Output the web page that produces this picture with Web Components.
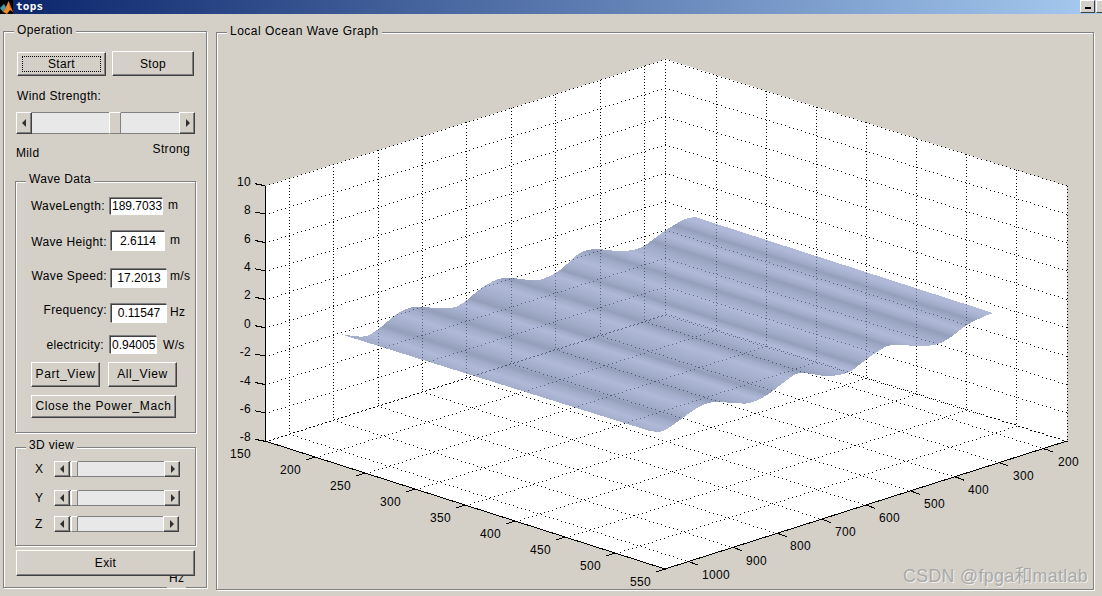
<!DOCTYPE html>
<html>
<head>
<meta charset="utf-8">
<title>tops</title>
<style>
  html, body { margin: 0; padding: 0; background: #d4d0c8; overflow: hidden; }
</style>
</head>
<body>
<tops-app></tops-app>
<script>
const BASE = `:host{font-family:"Liberation Sans",Arial,sans-serif;font-size:12px;line-height:14px;color:#000;letter-spacing:.35px}`;

class WinTitle extends HTMLElement {
    constructor() {
        super();
        this.attachShadow({ mode: 'open' }).innerHTML = `
            <style>
            :host { display:flex; height:14px; overflow:hidden; background:linear-gradient(90deg,#0a246a 0,#a6caf0 100%); }
            svg { flex:none; width:13px; height:14px; background:#000; }
            .name { margin-left:3px; font:bold 11px/13px "DejaVu Sans Mono",monospace; color:#fff; letter-spacing:.2px; }
            .gap { flex:1; }
            .btn { flex:none; box-sizing:border-box; width:15px; height:13px; margin-left:1px; background:#d4d0c8;
                   border:1px solid; border-color:#fff #404040 #404040 #fff; display:flex; align-items:center; justify-content:center; }
            .btn.cut { width:6px; border-right:0; }
            .btn i { display:block; width:6px; height:2px; margin-top:2px; background:#000; }
            </style>
            <svg viewBox="0 0 13 14">
                <path d="M0 8L4 4 6 7 3 12Z" fill="#3aa0b0"/>
                <path d="M3 12L6 7 8.5 1 13 12 10 10 7 14Z" fill="#f08a24"/>
                <path d="M8.5 1L13 12 10 7Z" fill="#b8400f"/>
            </svg>
            <span class="name">tops</span>
            <span class="gap"></span>
            <span class="btn"><i></i></span>
            <span class="btn cut"></span>
        `;
    }
}

class EtchedPanel extends HTMLElement {
    constructor() {
        super();
        this.attachShadow({ mode: 'open' }).innerHTML = `
            <style>
            ${BASE}
            :host { display:block; position:relative; box-sizing:border-box; border:1px solid #808080;
                    box-shadow:inset 1px 1px 0 #fff, 1px 1px 0 #fff; }
            .legend { position:absolute; left:10px; top:var(--legend-top,-9px); padding:0 3px; background:#d4d0c8; white-space:nowrap; letter-spacing:var(--legend-spacing,.35px); }
            </style>
            <span class="legend">${this.getAttribute('label') || ''}</span>
            <slot></slot>
        `;
    }
}

class WinButton extends HTMLElement {
    constructor() {
        super();
        const focus = this.hasAttribute('focused');
        this.attachShadow({ mode: 'open' }).innerHTML = `
            <style>
            ${BASE}
            :host { display:flex; align-items:center; justify-content:center; box-sizing:border-box; flex:none; position:relative;
                    background:#d4d0c8; border:1px solid; border-color:#fff #404040 #404040 #fff;
                    box-shadow:inset -1px -1px 0 #808080; }
            .focus { position:absolute; inset:3px 4px 3px 4px; border:1px dotted #000; }
            </style>
            ${focus ? '<span class="focus"></span>' : ''}
            <slot></slot>
        `;
    }
}

class ScrollBar extends HTMLElement {
    constructor() {
        super();
        const pos = this.getAttribute('pos') || 0;
        const thumb = this.getAttribute('thumb') || 12;
        this.attachShadow({ mode: 'open' }).innerHTML = `
            <style>
            :host { display:flex; box-sizing:border-box; flex:none; }
            .arrow { flex:none; width:16px; box-sizing:border-box; background:#d4d0c8; border:1px solid; border-color:#fff #404040 #404040 #fff;
                     box-shadow:inset -1px -1px 0 #808080; display:flex; align-items:center; justify-content:center; }
            .track { flex:1; display:flex; min-width:0; }
            .lane { background:#e8e8e8; border-top:1px solid #808080; border-bottom:1px solid #808080; box-sizing:border-box; }
            .before { flex:none; width:${pos}px; }
            .after { flex:1; }
            .thumb { flex:none; width:${thumb}px; box-sizing:border-box; background:#d4d0c8; border:1px solid; border-color:#fff #808080 #808080 #fff; }
            svg { width:5px; height:8px; }
            </style>
            <span class="arrow"><svg viewBox="0 0 5 8"><path d="M4 0V8L0 4Z" fill="#303030"/></svg></span>
            <span class="track"><span class="lane before"></span><span class="thumb"></span><span class="lane after"></span></span>
            <span class="arrow"><svg viewBox="0 0 5 8"><path d="M1 0V8L5 4Z" fill="#303030"/></svg></span>
        `;
    }
}

// one "label: [box] unit" line of the Wave Data panel, spacing comes from attributes
class DataRow extends HTMLElement {
    constructor() {
        super();
        const a = (n, d) => this.getAttribute(n) || d;
        this.attachShadow({ mode: 'open' }).innerHTML = `
            <style>
            ${BASE}
            :host { display:flex; align-items:flex-start; height:${a('bh', 19)}px; }
            .label { flex:none; width:${a('lw', 91)}px; margin-top:${a('ly', 0)}px; margin-right:${a('gap', 4)}px; text-align:right; white-space:nowrap; }
            .box { flex:none; box-sizing:border-box; width:${a('bw', 56)}px; height:${a('bh', 19)}px; background:#fff; overflow:hidden;
                   border:1px solid; border-color:#404040 #fff #fff #404040; box-shadow:-1px -1px 0 #808080;
                   padding:0 1px; white-space:nowrap; letter-spacing:0; text-align:${a('align', 'center')}; line-height:${a('bh', 19) - 2}px; }
            .unit { margin-top:${a('uy', 0)}px; margin-left:${a('ugap', 3)}px; }
            </style>
            <span class="label">${a('label', '')}</span>
            <span class="box">${a('value', '')}</span>
            <span class="unit">${a('unit', '')}</span>
        `;
    }
}

class SurfacePlot extends HTMLElement {
    constructor() {
        super();
        this.attachShadow({ mode: 'open' }).innerHTML = `
            <style>
            :host { display:block; width:876px; height:556px; }
            svg { display:block; }
            text { font-family:"Liberation Sans",Arial,sans-serif; font-size:12px; fill:#000; }
            .solid { stroke:#000; stroke-width:1; fill:none; shape-rendering:crispEdges; }
            </style>
            <svg width="876" height="556" viewBox="217 33 876 556">${this.draw()}</svg>
        `;
    }

    line(cls, x1, y1, x2, y2) {
        return `<line class="${cls}" x1="${x1.toFixed(1)}" y1="${y1.toFixed(1)}" x2="${x2.toFixed(1)}" y2="${y2.toFixed(1)}"/>`;
    }

    // dotted grid line as single pixels, dash patterns come out uneven on the diagonals
    dots(x1, y1, x2, y2) {
        const len = Math.hypot(x2 - x1, y2 - y1);
        const step = Math.abs(x2 - x1) < 1 ? 3.2 : 4.2;
        let d = '';
        for (let t = 0; t <= len; t += step) {
            const x = Math.round(x1 + (x2 - x1) * t / len), y = Math.round(y1 + (y2 - y1) * t / len);
            d += `M${x} ${y}h1v1h-1z`;
        }
        return d;
    }

    label(x, base, s, anchor) {
        return `<text x="${x}" y="${base}" text-anchor="${anchor}">${s}</text>`;
    }

    // catmull-rom through the measured outline points
    smooth(p) {
        let d = '';
        for (let i = 0; i < p.length - 1; i++) {
            const a = p[Math.max(i - 1, 0)], b = p[i], c = p[i + 1], e = p[Math.min(i + 2, p.length - 1)];
            const c1 = [b[0] + (c[0] - a[0]) / 6, b[1] + (c[1] - a[1]) / 6];
            const c2 = [c[0] - (e[0] - b[0]) / 6, c[1] - (e[1] - b[1]) / 6];
            d += `C${c1[0].toFixed(1)} ${c1[1].toFixed(1)} ${c2[0].toFixed(1)} ${c2[1].toFixed(1)} ${c[0]} ${c[1]}`;
        }
        return d;
    }

    draw() {
        let s = '', grid = '', ticks = '';
        s += `<path d="M265 186L666 59 1067 186V441L665 569 265 441Z" fill="#fff" shape-rendering="crispEdges"/>`;

        const zs = [];
        for (let k = 0; k < 10; k++) zs.push(185.7 + 28.4 * k);
        // walls
        zs.forEach(y => {
            grid += this.dots(265, y, 665, y - 126.5);
            grid += this.dots(665, y - 126.5, 1067, y);
        });
        for (let k = 0; k < 9; k++) {
            const x = 288.7 + 44.4 * k, top = 185.7 - 0.316 * (x - 265);
            grid += this.dots(x, top, x, top + 255.6);
        }
        for (let k = 0; k < 7; k++) {
            const x = 715.7 + 50 * k, top = 59.2 + 0.316 * (x - 665.5);
            grid += this.dots(x, top, x, top + 255.6);
        }
        grid += this.dots(665, 59, 665, 315);
        grid += this.dots(1067, 186, 1067, 441);

        // floor
        for (let k = 0; k < 9; k++) {
            const x = 265.7 + 50 * k, y = 441 + 16 * k;
            if (k < 8) grid += this.dots(x, y, x + 401.5, y - 127.5);
            if (k > 0) ticks += this.line('solid', x, y, x - 10, y + 3);
        }
        for (let k = 0; k < 9; k++) {
            const x = 688.7 + 44.4 * k, y = 569 - 0.318 * (x - 665);
            grid += this.dots(x, y, x - 400, y - 127.5);
            ticks += this.line('solid', x, y, x + 9, y + 3.5);
        }
        grid += this.dots(1067, 441, 667, 314);
        s += `<path d="${grid}" fill="#000" shape-rendering="crispEdges"/>` + ticks;

        // surface: bands run parallel to the back edge, fill is see through so the grid shows
        const lights = [10, 39, 69, 99, 127, 150, 174, 203, 226];
        const darks = [22, 52, 77, 109, 135, 164, 193, 216];
        const LIGHT = '#8e9cc7', MID = '#7b8ab4', DARK = '#67769d';
        const stop = (d, c) => `<stop offset="${(d / 230.6).toFixed(4)}" stop-color="${c}"/>`;
        let stops = stop(0, MID);
        lights.forEach((d, i) => {
            stops += stop(d, LIGHT);
            if (darks[i] !== undefined) {
                const e = darks[i], next = lights[i + 1];
                stops += stop(d + (e - d) * .6, MID) + stop(e, DARK) + stop(e + (next - e) * .4, MID);
            }
        });
        stops += stop(230.6, LIGHT);
        s += `<defs><linearGradient id="bands" gradientUnits="userSpaceOnUse" x1="340" y1="334" x2="407" y2="124.8">${stops}</linearGradient></defs>`;

        const top = [[340, 334], [363, 336.5], [377, 330], [397, 314], [413, 307], [430, 307.5], [450, 308], [463, 303], [483, 287], [503, 278], [530, 280], [543, 279], [560, 270], [580, 253], [597, 249], [617, 251], [640, 248], [663, 232], [683, 220], [695, 217]];
        const bottom = [[993, 313], [983, 317], [967, 325], [943, 342], [923, 346], [893, 345], [880, 350], [863, 362], [847, 373], [827, 376], [800, 373], [787, 380], [767, 395], [750, 403], [733, 403], [713, 402], [697, 408], [680, 420], [663, 431], [650, 431]];
        s += `<path d="M340 334${this.smooth(top)}L993 313${this.smooth(bottom)}Z" fill="url(#bands)" fill-opacity=".7" shape-rendering="crispEdges"/>`;

        // solid axes
        s += this.line('solid', 265, 185.7, 265, 441);
        s += this.line('solid', 265, 441, 665, 569);
        s += this.line('solid', 665, 569, 1067, 441);

        // z ticks and labels
        zs.forEach((y, k) => {
            s += this.line('solid', 265, y, 255, y - 2);
            s += this.label(251, Math.round(y), 10 - 2 * k, 'end');
        });
        // y labels (150..550)
        for (let k = 0; k < 9; k++) s += this.label(251 + 50 * k, 458 + 16 * k, 150 + 50 * k, 'end');
        // x labels (200..1000)
        const xl = [[1058, 466, 200], [1013, 480, 300], [968, 494, 400], [924, 508, 500], [879, 522, 600], [835, 536, 700], [790, 550, 800], [746, 565, 900], [702, 579, 1000]];
        xl.forEach(p => { s += this.label(p[0], p[1], p[2], 'start'); });
        return s;
    }
}

class WaterMark extends HTMLElement {
    constructor() {
        super();
        this.attachShadow({ mode: 'open' }).innerHTML = `
            <style>
            :host { display:block; position:absolute; left:903px; top:566px; white-space:nowrap;
                    font:17.8px/20px "Liberation Sans","Noto Sans CJK SC",sans-serif; color:#a9a9a9; text-shadow:1px 1px 0 #f0efec; }
            </style>
            <slot></slot>
        `;
    }
}

class TopsApp extends HTMLElement {
    constructor() {
        super();
        this.attachShadow({ mode: 'open' }).innerHTML = `
            <style>
            ${BASE}
            :host { display:block; position:relative; width:1102px; height:596px; overflow:hidden; background:#d4d0c8; }
            .main { display:flex; align-items:flex-start; padding:17px 0 0 3px; }
            #left { width:204px; height:557px; flex:none; }
            #right { width:878px; height:558px; flex:none; margin:1px 0 0 9px; --legend-spacing:.5px; }
            .actions { display:flex; align-items:flex-end; gap:6px; margin:19px 0 0 13px; }
            #start { width:89px; height:24px; }
            #stop { width:82px; height:25px; }
            .wind { margin:13px 0 0 13px; }
            #wind { width:179px; height:22px; margin:9px 0 0 12px; }
            .ends { display:flex; justify-content:space-between; width:174px; height:17px; margin:8px 0 0 12px; }
            .ends .mild { margin-top:4px; }
            #wave { width:181px; height:252px; margin:22px 0 0 11px; --legend-top:-10px; }
            #view { width:181px; height:99px; margin:14px 0 0 11px; --legend-top:-10px; }
            #exit { width:179px; height:26px; margin:4px 0 0 12px; z-index:1; }
            .lost { position:absolute; left:163px; bottom:-1px; width:19px; height:17px; padding-left:2px; box-sizing:border-box; background:#d4d0c8; }
            data-row { margin-top:16px; }
            .views { display:flex; gap:8px; margin:8px 0 0 15px; }
            .views win-button { width:69px; height:25px; padding-bottom:2px; letter-spacing:.6px; }
            #close { width:145px; height:23px; margin:8px 0 0 15px; padding-bottom:2px; white-space:nowrap; letter-spacing:.6px; }
            .axis { display:flex; align-items:center; margin-left:19px; }
            .axis span { width:19px; }
            .axis scroll-bar { width:126px; height:16px; }
            </style>
            <win-title></win-title>
            <div class="main">
                <etched-panel id="left" label="Operation">
                    <div class="actions">
                        <win-button id="start" focused>Start</win-button>
                        <win-button id="stop">Stop</win-button>
                    </div>
                    <div class="wind">Wind Strength:</div>
                    <scroll-bar id="wind" pos="77" thumb="12"></scroll-bar>
                    <div class="ends"><span class="mild">Mild</span><span>Strong</span></div>
                    <etched-panel id="wave" label="Wave Data">
                        <data-row label="WaveLength:" value="189.7033" unit="m" lw="89" gap="5" bw="53" bh="17" ly="1" ugap="5"></data-row>
                        <data-row label="Wave Height:" value="2.6114" unit="m" lw="91" gap="4" bw="54" bh="20" ly="4" uy="2" ugap="5"></data-row>
                        <data-row style="margin-top:18px" label="Wave Speed:" value="17.2013" unit="m/s" lw="91" gap="4" bw="56" bh="19" ugap="3"></data-row>
                        <data-row label="Frequency:" value="0.11547" unit="Hz" lw="91" gap="4" bw="56" bh="19" ly="-1" uy="1" ugap="3"></data-row>
                        <data-row style="margin-top:13px" label="electricity:" value="0.94005" unit="W/s" lw="88" gap="6" bw="47" bh="18" ly="2" uy="2" ugap="6" align="left"></data-row>
                        <div class="views">
                            <win-button>Part_View</win-button>
                            <win-button>All_View</win-button>
                        </div>
                        <win-button id="close">Close the Power_Mach</win-button>
                    </etched-panel>
                    <etched-panel id="view" label="3D view">
                        <div class="axis" style="margin-top:13px"><span>X</span><scroll-bar pos="1" thumb="7"></scroll-bar></div>
                        <div class="axis" style="margin-top:13px"><span>Y</span><scroll-bar pos="1" thumb="7"></scroll-bar></div>
                        <div class="axis" style="margin-top:10px"><span>Z</span><scroll-bar pos="1" thumb="7" style="width:125px"></scroll-bar></div>
                    </etched-panel>
                    <span class="lost">Hz</span>
                    <win-button id="exit">Exit</win-button>
                </etched-panel>
                <etched-panel id="right" label="Local Ocean Wave Graph">
                    <surface-plot></surface-plot>
                </etched-panel>
            </div>
            <water-mark>CSDN @fpga和matlab</water-mark>
        `;
    }
}

window.customElements.define('win-title', WinTitle);
window.customElements.define('etched-panel', EtchedPanel);
window.customElements.define('win-button', WinButton);
window.customElements.define('scroll-bar', ScrollBar);
window.customElements.define('data-row', DataRow);
window.customElements.define('surface-plot', SurfacePlot);
window.customElements.define('water-mark', WaterMark);
window.customElements.define('tops-app', TopsApp);
</script>
</body>
</html>
